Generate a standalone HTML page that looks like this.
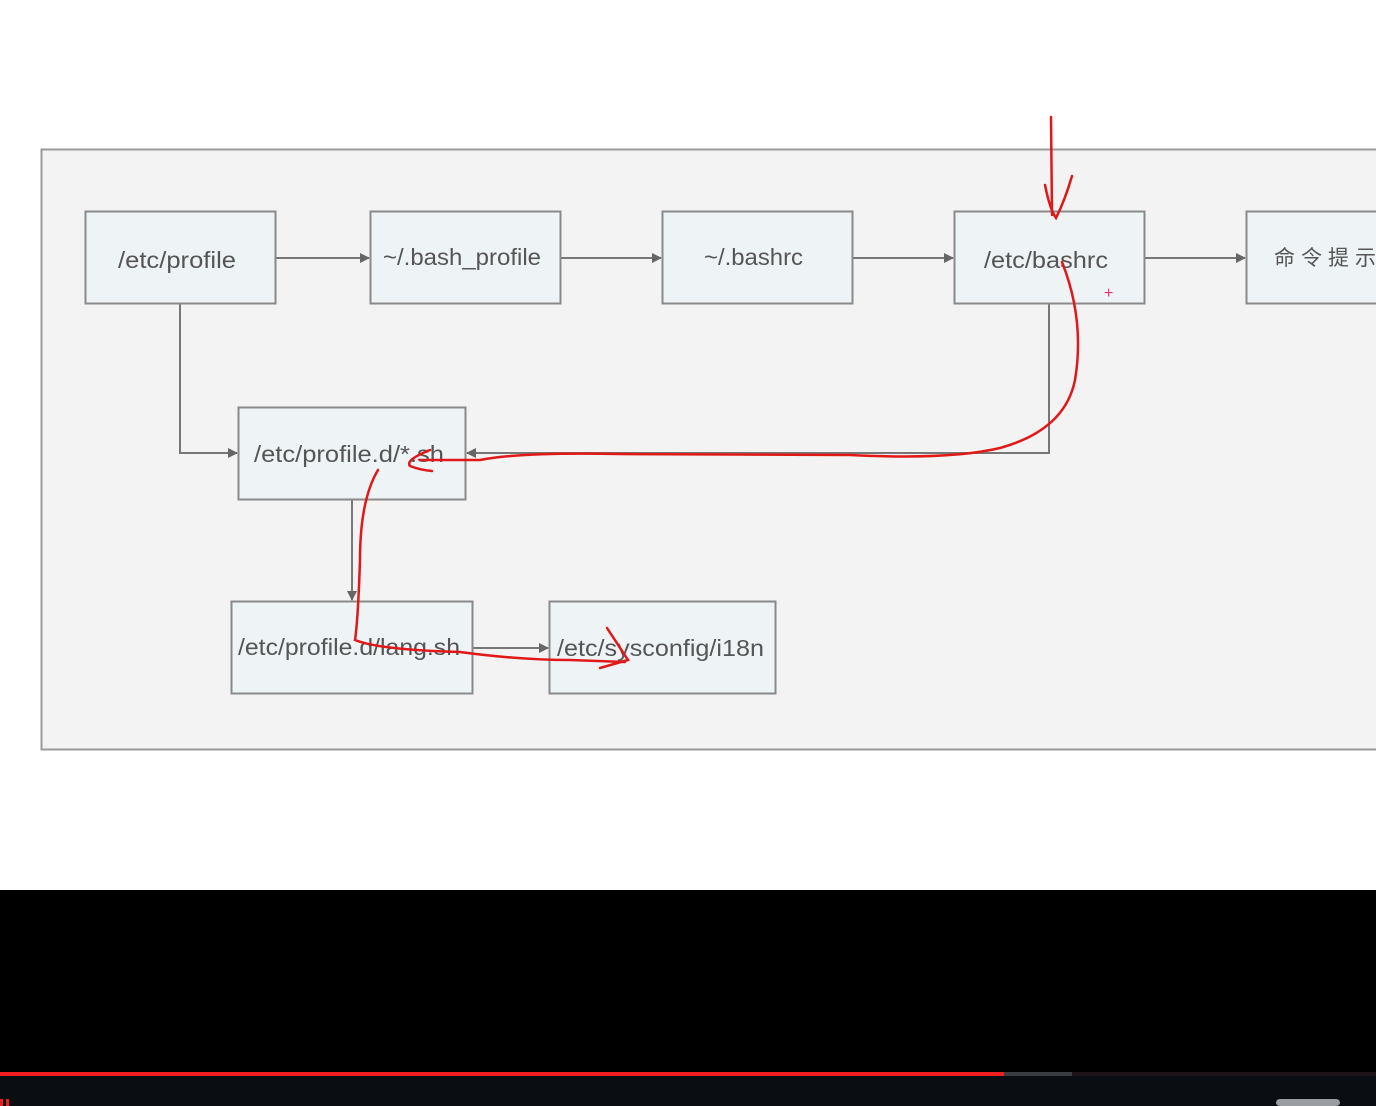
<!DOCTYPE html>
<html><head><style>
html,body{margin:0;padding:0;width:1376px;height:1106px;overflow:hidden;background:#fff}
svg{display:block}
text{font-family:"Liberation Sans","Noto Sans CJK SC",sans-serif;font-size:23px;fill:#555}
</style></head><body>
<svg width="1376" height="1106" viewBox="0 0 1376 1106">
<rect x="0" y="0" width="1376" height="890" fill="#fff"/>
<rect x="41.5" y="149.5" width="1340" height="600" fill="#f3f3f3" stroke="#9a9a9a" stroke-width="2"/>
<defs><marker id="a" markerWidth="10" markerHeight="10" refX="9" refY="5" orient="auto" markerUnits="userSpaceOnUse"><path d="M0,0 L10,5 L0,10z" fill="#666"/></marker></defs>
<g stroke="#777" stroke-width="2" fill="none">
<line x1="276" y1="258" x2="369" y2="258" marker-end="url(#a)"/>
<line x1="561" y1="258" x2="661" y2="258" marker-end="url(#a)"/>
<line x1="853" y1="258" x2="953" y2="258" marker-end="url(#a)"/>
<line x1="1145" y1="258" x2="1245" y2="258" marker-end="url(#a)"/>
<polyline points="180,304 180,453 237,453" marker-end="url(#a)"/>
<polyline points="1049,304 1049,453 467,453" marker-end="url(#a)"/>
<line x1="352" y1="500" x2="352" y2="600" marker-end="url(#a)"/>
<line x1="473" y1="648" x2="548" y2="648" marker-end="url(#a)"/>
</g>
<g fill="#eef3f6" stroke="#8a8a8a" stroke-width="2">
<rect x="85.5" y="211.5" width="190" height="92"/>
<rect x="370.5" y="211.5" width="190" height="92"/>
<rect x="662.5" y="211.5" width="190" height="92"/>
<rect x="954.5" y="211.5" width="190" height="92"/>
<rect x="1246.5" y="211.5" width="150" height="92"/>
<rect x="238.5" y="407.5" width="227" height="92"/>
<rect x="231.5" y="601.5" width="241" height="92"/>
<rect x="549.5" y="601.5" width="226" height="92"/>
</g>
<text x="118" y="268" textLength="118" lengthAdjust="spacingAndGlyphs">/etc/profile</text>
<text x="383" y="265" textLength="158" lengthAdjust="spacingAndGlyphs">~/.bash_profile</text>
<text x="704" y="265" textLength="99" lengthAdjust="spacingAndGlyphs">~/.bashrc</text>
<text x="984" y="268" textLength="124" lengthAdjust="spacingAndGlyphs">/etc/bashrc</text>
<text x="1274" y="265" letter-spacing="6" style="font-size:21px">命令提示</text>
<text x="254" y="462" textLength="190" lengthAdjust="spacingAndGlyphs">/etc/profile.d/*.sh</text>
<text x="238" y="655" textLength="222" lengthAdjust="spacingAndGlyphs">/etc/profile.d/lang.sh</text>
<text x="557" y="656" textLength="207" lengthAdjust="spacingAndGlyphs">/etc/sysconfig/i18n</text>
<text x="1104" y="298" style="fill:#e0307a;font-size:16px">+</text>
<g stroke="#e01818" stroke-width="2.5" fill="none" stroke-linecap="round">
<path d="M1051,117 L1052,215"/>
<path d="M1045,185 Q1050,210 1056,218 Q1065,200 1072,176"/>
<path d="M1062,262 Q1085,320 1075,380 Q1065,430 1000,448 Q950,460 850,455 L620,454 Q520,452 480,460 L420,460"/>
<path d="M430,450 Q405,460 410,466 Q420,470 432,471"/>
<path d="M378,470 Q360,500 360,560 Q358,620 355,640 Q380,650 460,652 Q520,660 570,660 L625,662"/>
<path d="M607,628 L628,660 L600,668"/>
</g>
<rect x="0" y="890" width="1376" height="216" fill="#000"/>
<rect x="0" y="1072" width="1004" height="4" fill="#f01e1e"/>
<rect x="1004" y="1072" width="68" height="4" fill="#3a3e42"/>
<rect x="1072" y="1072" width="304" height="4" fill="#1c1418"/>
<rect x="0" y="1076" width="1376" height="30" fill="#0a0e12"/>
<rect x="0" y="1099" width="3" height="7" fill="#f01e1e"/>
<rect x="6" y="1099" width="3" height="7" fill="#f01e1e"/>
<rect x="1276" y="1099" width="64" height="7" rx="4" fill="#9a9ea2"/>
</svg>
</body></html>
